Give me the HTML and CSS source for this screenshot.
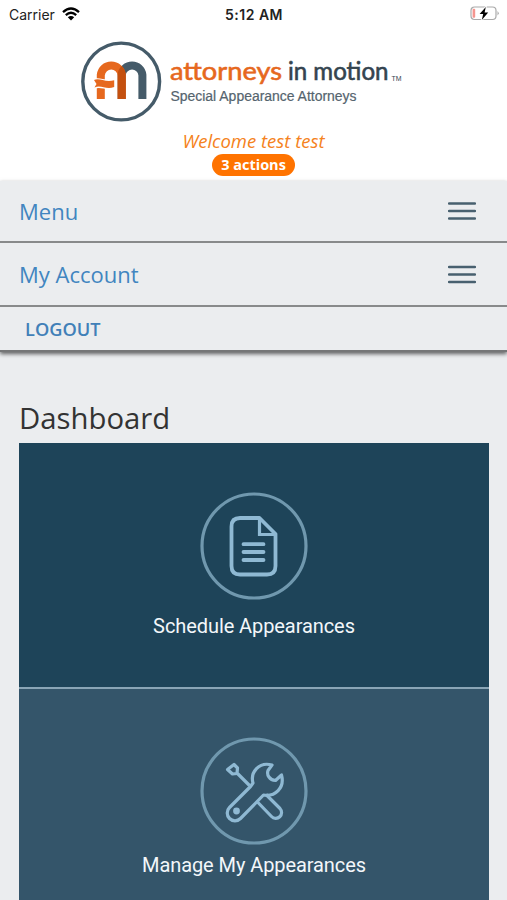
FILE: index.html
```html
<!DOCTYPE html>
<html lang="en">
<head>
    <meta charset="UTF-8">
    <meta name="viewport" content="width=device-width, initial-scale=1.0">
    <title>Attorneys In Motion</title>
    <link rel="stylesheet" href="styles.css">
</head>
<body>
    <div class="status-bar">
        <div class="carrier">
            <span>Carrier</span>
            <svg width="18" height="14" viewBox="0 0 18 14" fill="none" stroke="#000" stroke-width="2.3">
                <path d="M1 5.1 Q9 -2.2 17 5.1"/>
                <path d="M3.8 8.1 Q9 3.4 14.2 8.1"/>
                <path d="M9 13.4 L5.8 10.3 Q9 7.7 12.2 10.3 Z" fill="#000" stroke="none"/>
            </svg>
        </div>
        <span class="time">5:12 AM</span>
        <div class="battery">
            <svg width="29" height="16" viewBox="0 0 29 16">
                <rect x="1" y="1" width="25" height="12.5" rx="3.5" fill="none" stroke="#aaa" stroke-width="1.2"/>
                <path d="M27.5 5 Q30 7.3 27.5 9.5 Z" fill="#aaa"/>
                <rect x="2.6" y="2.7" width="2.6" height="9" rx="1" fill="#f5958f"/>
                <path d="M15.8 1 L9.6 8.1 H13.2 L11.8 13.9 L18.2 6.6 H14.6 Z" fill="#000" stroke="#fff" stroke-width="1.6" paint-order="stroke"/>
            </svg>
        </div>
    </div>

    <header class="header">
        <svg class="logo" width="324" height="84" viewBox="0 0 324 84">
            <circle cx="41.2" cy="41.5" r="38.4" fill="none" stroke="#455b69" stroke-width="3.4"/>
            <path d="M41.7 59 V35 A10.4 10.4 0 0 1 62.4 35 V59" fill="none" stroke="#455b69" stroke-width="8"/>
            <path d="M20.8 59 V35 A10.5 10.5 0 0 1 41.7 35 V59" fill="none" stroke="#e6681e" stroke-width="8"/>
            <path d="M41.7 26 Q45.7 29.5 45.7 35 V59 H37.7 V35 Q37.7 29.5 41.7 26 Z" fill="#c4500f"/>
            <path d="M14 40 C20 37.5 25 43 34.2 40.3 V47 C26 50 21 44.5 14.5 47.5 L16.5 44 Z" fill="#e6681e" stroke="#fff" stroke-width="2.4" paint-order="stroke"/>
            <text class="logo-name" x="90" y="40" textLength="112" lengthAdjust="spacingAndGlyphs" fill="#e6681e" stroke="#e6681e">attorneys</text>
            <text class="logo-name" x="208" y="40" textLength="100.5" lengthAdjust="spacingAndGlyphs" fill="#34444f" stroke="#34444f">in motion</text>
            <text class="logo-tm" x="311.5" y="41" textLength="10" lengthAdjust="spacingAndGlyphs">TM</text>
            <text class="logo-tagline" x="90.5" y="60.5" textLength="186" lengthAdjust="spacingAndGlyphs">Special Appearance Attorneys</text>
        </svg>
        <div class="welcome">Welcome test test</div>
        <a class="badge">3 actions</a>
    </header>

    <nav class="nav">
        <a class="nav-item">
            <span>Menu</span>
            <svg class="hamburger" width="28" height="20" viewBox="0 0 28 20">
                <path d="M1 2.5 H27 M1 10 H27 M1 17.5 H27"/>
            </svg>
        </a>
        <a class="nav-item">
            <span>My Account</span>
            <svg class="hamburger" width="28" height="20" viewBox="0 0 28 20">
                <path d="M1 3 H27 M1 10.5 H27 M1 18 H27"/>
            </svg>
        </a>
        <a class="logout">LOGOUT</a>
    </nav>

    <main class="content">
        <h1>Dashboard</h1>
        <a class="tile schedule">
            <svg class="tile-icon" width="108" height="108" viewBox="0 0 108 108" fill="none" stroke="#8fb9d3" stroke-width="3.8">
                <circle cx="54" cy="54" r="52" stroke="#7098ae" stroke-width="3.2"/>
                <path d="M59.5 26 H40 Q31.5 26 31.5 34.5 V74 Q31.5 82.5 40 82.5 H67 Q75.5 82.5 75.5 74 V42 Z" stroke-linejoin="round"/>
                <path d="M59.5 26 V42.5 H75.5" stroke-width="3.2"/>
                <path d="M43.5 52.2 H63.5 M43.5 60 H63.5 M43.5 68 H63.5" stroke-linecap="round"/>
            </svg>
            <span>Schedule Appearances</span>
        </a>
        <a class="tile manage">
            <svg class="tile-icon" width="108" height="108" viewBox="0 0 108 108" fill="none" stroke="#8fb9d3" stroke-width="3.2" stroke-linejoin="round">
                <circle cx="54" cy="54" r="52" stroke="#7098ae" stroke-width="3.2"/>
                <path d="M27.5 32.5 L34 27.5 L37.5 31 L37 36.5 L32.5 37 Z"/>
                <path d="M37.5 36.5 L49.5 48.5"/>
                <path d="M50.5 49.5 L29.5 70.5 A7.4 7.4 0 0 0 40.5 81.5 L63.5 58 C75 60 85 51 81.5 38 L75.5 43.5 C69.5 43 66.5 38 68 33.5 L72 28 C59 24.5 50 35 53 46 Z"/>
                <path d="M57.5 65 L71.5 79.5 A5.8 5.8 0 0 0 80 71.5 L66 57.5"/>
                <circle cx="36.5" cy="74" r="3.4" fill="#8fb9d3" stroke="none"/>
            </svg>
            <span>Manage My Appearances</span>
        </a>
    </main>
</body>
</html>
```

FILE: styles.css
```css
* {
    box-sizing: border-box;
}
body {
    margin: 0;
    height: 900px;
    overflow: hidden;
    font-family: 'Open Sans', 'Noto Sans', sans-serif;
    background-color: #ebedef;
    color: #333;
}
.status-bar {
    display: grid;
    grid-template-columns: 1fr auto 1fr;
    align-items: center;
    height: 28px;
    padding: 0 8px 0 9px;
    background: #fff;
    color: #222;
    font-family: Inter, sans-serif;
    font-size: 14px;
}
.carrier {
    display: flex;
    align-items: center;
    gap: 7px;
}
.time {
    font-weight: 600;
    letter-spacing: 0.5px;
}
.battery {
    display: flex;
    justify-content: flex-end;
}
.header {
    display: flex;
    flex-direction: column;
    align-items: center;
    height: 153px;
    padding-top: 12px;
    background: #fff;
}
.logo {
    flex-shrink: 0;
    margin-right: 23px;
}
.logo-name {
    font: 400 25px Lato, sans-serif;
    stroke-width: 0.6px;
}
.logo-tm {
    font: 7px 'Liberation Sans', sans-serif;
    fill: #34444f;
}
.logo-tagline {
    font: 14px 'Liberation Sans', sans-serif;
    fill: #55646e;
    stroke: #55646e;
    stroke-width: 0.2px;
}
.welcome {
    margin-top: 4px;
    font-size: 18.5px;
    font-style: italic;
    line-height: 26px;
    color: #f58220;
}
.badge {
    width: 83px;
    height: 22px;
    border-radius: 11px;
    background: #ff7300;
    color: #fff;
    font-size: 14.5px;
    font-weight: 700;
    line-height: 21px;
    text-align: center;
}
.nav {
    border-bottom: 2px solid #757677;
    box-shadow: 0 2px 4px rgba(0, 0, 0, 0.6);
}
.nav-item {
    display: flex;
    justify-content: space-between;
    align-items: center;
    height: 62px;
    padding: 0 31px 0 19px;
    border-bottom: 2px solid #888a8b;
    color: #4185c0;
    font-size: 22px;
}
.nav-item + .nav-item {
    height: 64px;
}
.hamburger {
    stroke: #48606f;
    stroke-width: 2.4;
    stroke-linecap: round;
}
.logout {
    display: block;
    height: 43px;
    padding-left: 25px;
    color: #4180b8;
    font-size: 18.2px;
    font-weight: 600;
    line-height: 44px;
}
.content {
    padding: 45px 18px 0 19px;
}
h1 {
    margin: 0;
    height: 46px;
    font-size: 29.3px;
    font-weight: 400;
    line-height: 42px;
}
.tile {
    display: flex;
    flex-direction: column;
    align-items: center;
    height: 245px;
    padding-top: 49px;
    color: #f3f7fa;
    font-family: Roboto, sans-serif;
    font-size: 20px;
    letter-spacing: -0.08px;
    line-height: 24px;
}
.schedule {
    height: 246px;
    background: #1e4459;
    border-bottom: 2px solid #8aa5b6;
}
.schedule span {
    margin-top: 14px;
}
.manage {
    height: 211px;
    padding-top: 48px;
    background: #34556a;
}
.manage span {
    margin-top: 8px;
}
```
